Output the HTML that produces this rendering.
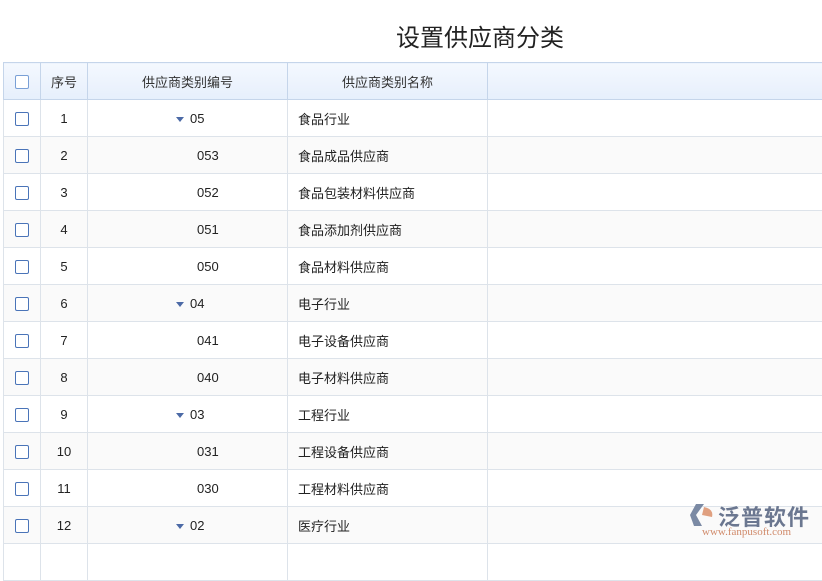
<!DOCTYPE html><html><head><meta charset="utf-8"><style>
body{margin:0;width:822px;height:547px;overflow:hidden;background:#fff;font-family:"Liberation Sans","Noto Sans CJK SC",sans-serif;}
.t{position:absolute;left:396px;top:18px;font-size:24px;color:#222;}
table{position:absolute;left:3px;top:62px;border-collapse:collapse;width:830px;table-layout:fixed;}
td,th{border:1px solid #dde3ea;height:36px;padding:0;font-size:13px;color:#222;font-weight:normal;}
th{background:linear-gradient(#f4f8fe,#e6effc);border-color:#c5d5ea;color:#333;}
tr:nth-child(odd) td{background:#fafafa}
.c{text-align:center}
.cb{display:inline-block;width:12px;height:12px;border:1px solid #4a74b8;border-radius:2px;background:#fff;vertical-align:middle}
th .cb{border-color:#7aa0d6}
.tri{display:inline-block;width:0;height:0;border-left:4px solid transparent;border-right:4px solid transparent;border-top:5px solid #4c6aa6;margin-right:6px;vertical-align:middle}
.n{padding-left:10px}
.logo{position:absolute;left:690px;top:500px;}
</style></head><body>
<div class="t">设置供应商分类</div>
<table>
<colgroup><col style="width:37px"><col style="width:47px"><col style="width:200px"><col style="width:200px"><col></colgroup>
<tr><th class="c"><span class="cb"></span></th><th class="c">序号</th><th class="c">供应商类别编号</th><th class="c">供应商类别名称</th><th></th></tr>
<tr><td class="c"><span class="cb"></span></td><td class="c">1</td><td style="padding-left:88px"><span class="tri"></span>05</td><td class="n">食品行业</td><td></td></tr>
<tr><td class="c"><span class="cb"></span></td><td class="c">2</td><td style="padding-left:109px">053</td><td class="n">食品成品供应商</td><td></td></tr>
<tr><td class="c"><span class="cb"></span></td><td class="c">3</td><td style="padding-left:109px">052</td><td class="n">食品包装材料供应商</td><td></td></tr>
<tr><td class="c"><span class="cb"></span></td><td class="c">4</td><td style="padding-left:109px">051</td><td class="n">食品添加剂供应商</td><td></td></tr>
<tr><td class="c"><span class="cb"></span></td><td class="c">5</td><td style="padding-left:109px">050</td><td class="n">食品材料供应商</td><td></td></tr>
<tr><td class="c"><span class="cb"></span></td><td class="c">6</td><td style="padding-left:88px"><span class="tri"></span>04</td><td class="n">电子行业</td><td></td></tr>
<tr><td class="c"><span class="cb"></span></td><td class="c">7</td><td style="padding-left:109px">041</td><td class="n">电子设备供应商</td><td></td></tr>
<tr><td class="c"><span class="cb"></span></td><td class="c">8</td><td style="padding-left:109px">040</td><td class="n">电子材料供应商</td><td></td></tr>
<tr><td class="c"><span class="cb"></span></td><td class="c">9</td><td style="padding-left:88px"><span class="tri"></span>03</td><td class="n">工程行业</td><td></td></tr>
<tr><td class="c"><span class="cb"></span></td><td class="c">10</td><td style="padding-left:109px">031</td><td class="n">工程设备供应商</td><td></td></tr>
<tr><td class="c"><span class="cb"></span></td><td class="c">11</td><td style="padding-left:109px">030</td><td class="n">工程材料供应商</td><td></td></tr>
<tr><td class="c"><span class="cb"></span></td><td class="c">12</td><td style="padding-left:88px"><span class="tri"></span>02</td><td class="n">医疗行业</td><td></td></tr>
<tr><td></td><td></td><td></td><td></td><td></td></tr>
</table>
<div class="logo">
<svg width="26" height="24" style="position:absolute;left:0;top:3px"><polygon points="6,1 14,1 6,12 12,23 4,23 0,12" fill="#7b8aa4"/><path d="M14,4 Q24,6 22,14 L12,12 Z" fill="#e0a080"/></svg>
<div style="position:absolute;left:28px;top:0;font-size:22px;color:#6b7790;font-weight:bold;white-space:nowrap;letter-spacing:1px">泛普软件</div>
<div style="position:absolute;left:12px;top:26px;font-size:11px;color:#d08a6a;font-family:'Liberation Serif',serif;white-space:nowrap">www.fanpusoft.com</div>
</div>
</body></html>
